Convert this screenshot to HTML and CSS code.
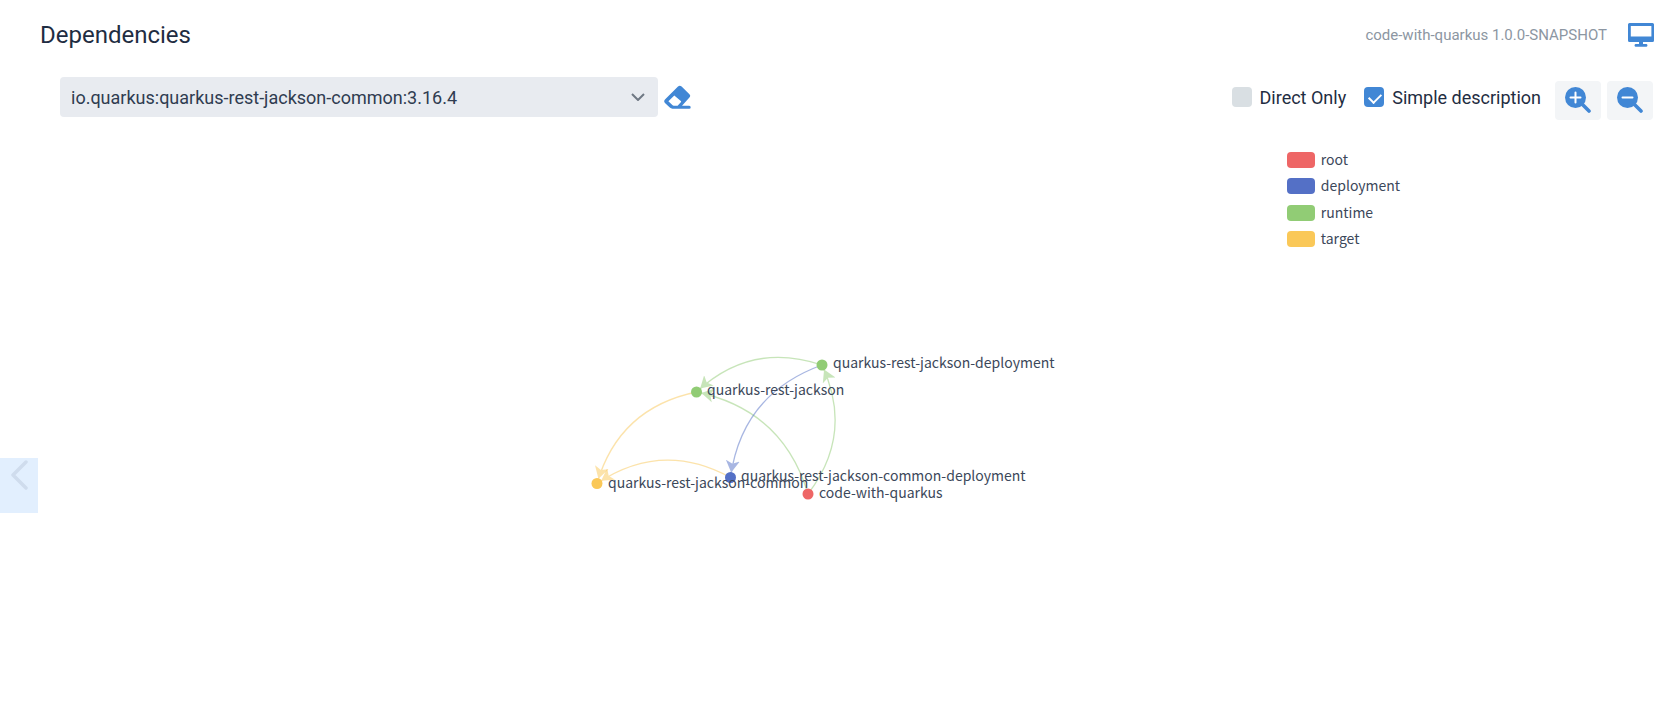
FILE: index.html
```html
<!DOCTYPE html>
<html lang="en">
<head>
<meta charset="utf-8">
<meta name="viewport" content="width=device-width, initial-scale=1">
<title>Dependencies</title>
<link rel="stylesheet" href="styles.css">
</head>
<body>
<header class="header">
  <h1 class="title">Dependencies</h1>
  <div class="app-info">
    <span>code-with-quarkus 1.0.0-SNAPSHOT</span>
    <button class="icon-button" type="button" aria-label="Theme">
      <svg width="26" height="24" viewBox="0 0 26 24"><path fill="currentColor" fill-rule="evenodd" d="M1.500 0h23A1.500 1.500 0 0 1 26 1.500v16a1.500 1.500 0 0 1-1.500 1.500H15v2h3.500a1.500 1.500 0 0 1 0 2.800h-11a1.500 1.500 0 0 1 0-2.800H11v-2H1.500A1.500 1.500 0 0 1 0 17.500v-16A1.500 1.500 0 0 1 1.500 0zM2.800 3v10.500h20.600V3z"/></svg>
    </button>
  </div>
</header>
<main class="content">
  <div class="toolbar">
    <div class="picker">
      <div class="select-box">
        <select class="select" aria-label="Dependency"><option>io.quarkus:quarkus-rest-jackson-common:3.16.4</option></select>
        <svg class="select-arrow" width="14" height="8" viewBox="0 0 14 8"><path d="M1 1l6 6 6-6" fill="none" stroke="currentColor" stroke-width="2"/></svg>
      </div>
      <button class="icon-button" type="button" aria-label="Clear">
        <svg width="27" height="24" viewBox="0 0 27 24"><path fill="currentColor" fill-rule="evenodd" d="M14 1.600a2.500 2.500 0 0 1 3.600 0l7.600 7.300a2.700 2.700 0 0 1 0 3.900L18 20.700h7.200a1.500 1.500 0 0 1 0 3H8.500a4 4 0 0 1-2.700-1.100l-4.600-4.400a2.700 2.700 0 0 1 0-3.900zM10.300 10.400L4.400 16.200l4.200 4.100q.5.400 1 .4h4l3.200-3.400q.6-.7 0-1.200z"/></svg>
      </button>
    </div>
    <div class="options">
      <label class="option"><input class="check" type="checkbox">Direct Only</label>
      <label class="option"><input class="check" type="checkbox" checked>Simple description</label>
      <div class="zoom-buttons">
        <button class="zoom-button" type="button" aria-label="Zoom in">
          <svg width="26" height="26" viewBox="0 0 26 26"><circle cx="10.500" cy="10.500" r="10.500" fill="currentColor"/><path d="M17 17l7 7" stroke="currentColor" stroke-width="3.600" stroke-linecap="round"/><path d="M5.500 10.500h10M10.500 5.500v10" stroke="#fff" stroke-width="2" stroke-linecap="round"/></svg>
        </button>
        <button class="zoom-button" type="button" aria-label="Zoom out">
          <svg width="26" height="26" viewBox="0 0 26 26"><circle cx="10.500" cy="10.500" r="10.500" fill="currentColor"/><path d="M17 17l7 7" stroke="currentColor" stroke-width="3.600" stroke-linecap="round"/><path d="M5.500 10.500h10" stroke="#fff" stroke-width="2" stroke-linecap="round"/></svg>
        </button>
      </div>
    </div>
  </div>
  <ul class="legend">
    <li class="legend-item"><span class="swatch root"></span>root</li>
    <li class="legend-item"><span class="swatch deployment"></span>deployment</li>
    <li class="legend-item"><span class="swatch runtime"></span>runtime</li>
    <li class="legend-item"><span class="swatch target"></span>target</li>
  </ul>
  <div class="chart">
    <svg class="graph" width="480" height="160" viewBox="590 350 480 160">
      <defs>
        <marker id="arrow-green" markerUnits="userSpaceOnUse" markerWidth="30" markerHeight="20" refX="17" refY="8" orient="auto"><path fill="#91cc75" d="M12 8L0 1 3 8 0 15z"/></marker>
        <marker id="arrow-blue" markerUnits="userSpaceOnUse" markerWidth="30" markerHeight="20" refX="17" refY="8" orient="auto"><path fill="#5470c6" d="M12 8L0 1 3 8 0 15z"/></marker>
        <marker id="arrow-yellow" markerUnits="userSpaceOnUse" markerWidth="30" markerHeight="20" refX="17" refY="8" orient="auto"><path fill="#fac858" d="M12 8L0 1 3 8 0 15z"/></marker>
      </defs>
      <g class="edges">
        <path class="edge-green" marker-end="url(#arrow-green)" d="M822 365Q751 341 696.500 392"/>
        <path class="edge-green" marker-end="url(#arrow-green)" d="M808 494Q854 434 822 365"/>
        <path class="edge-green" marker-end="url(#arrow-green)" d="M808 494Q783 410 696.500 392"/>
        <path class="edge-blue" marker-end="url(#arrow-blue)" d="M822 365Q742 394 730.500 477.500"/>
        <path class="edge-yellow" marker-end="url(#arrow-yellow)" d="M696.500 392Q619 408 597 483.500"/>
        <path class="edge-yellow" marker-end="url(#arrow-yellow)" d="M730.500 477.500Q662 440 597 483.500"/>
      </g>
      <circle class="root" cx="808" cy="494" r="5.500"/>
      <circle class="runtime" cx="822" cy="365" r="5.500"/>
      <circle class="runtime" cx="696.500" cy="392" r="5.500"/>
      <circle class="deployment" cx="730.500" cy="477.500" r="5.500"/>
      <circle class="target" cx="597" cy="483.500" r="5.500"/>
      <g class="node-labels">
        <text x="833" y="368">quarkus-rest-jackson-deployment</text>
        <text x="707" y="395">quarkus-rest-jackson</text>
        <text x="741" y="481">quarkus-rest-jackson-common-deployment</text>
        <text x="608" y="488">quarkus-rest-jackson-common</text>
        <text x="819" y="498">code-with-quarkus</text>
      </g>
    </svg>
  </div>
</main>
<button class="side-tab" type="button" aria-label="Open menu">
  <svg width="18" height="30" viewBox="0 0 18 30"><path d="M16 2L3 15l13 13" fill="none" stroke="currentColor" stroke-width="3.500" stroke-linecap="round" stroke-linejoin="round"/></svg>
</button>
</body>
</html>
```
FILE: styles.css
```css
* { box-sizing: border-box; }
body {
  margin: 0;
  min-height: 100vh;
  display: flex;
  flex-direction: column;
  background: #fff;
  color: #1f2d42;
  font-family: Roboto, sans-serif;
  font-size: 18px;
}
button { font: inherit; border: 0; padding: 0; cursor: pointer; }
svg { display: block; }
.header {
  display: flex;
  align-items: center;
  justify-content: space-between;
  height: 69px;
  padding: 0 15px 0 40px;
}
.title { margin: 0; font-size: 24px; font-weight: 400; }
.app-info { display: flex; align-items: center; gap: 21px; color: #8c96a2; font-size: 15px; }
.icon-button { background: none; color: #4187d5; }
.content { flex: 1; display: flex; flex-direction: column; padding-top: 8px; }
.toolbar { display: flex; justify-content: space-between; padding: 0 16px 0 60px; }
.picker { display: flex; align-items: center; gap: 6px; flex: 0 1 631px; height: 40px; }
.select-box { position: relative; flex: 1; }
.select {
  appearance: none;
  width: 100%;
  height: 40px;
  padding: 0 40px 0 11px;
  border: 0;
  border-radius: 4px;
  background: #e8ebf0;
  color: #2f3c50;
  font: inherit;
}
.select-arrow { position: absolute; right: 13px; top: 16px; color: #6f7884; pointer-events: none; }
.options { display: flex; align-items: flex-start; gap: 18px; }
.option { display: flex; align-items: center; gap: 8px; height: 40px; }
.check {
  appearance: none;
  width: 20px;
  height: 20px;
  margin: 0;
  border-radius: 4px;
  background: #d9dfe3;
}
.check:checked { position: relative; background: #4187d5; }
.check:checked::after {
  content: "";
  position: absolute;
  left: 7px;
  top: 4px;
  width: 6px;
  height: 10px;
  border: solid #fff;
  border-width: 0 2px 2px 0;
  transform: rotate(45deg);
}
.zoom-buttons { display: flex; gap: 6px; margin: 4px 0 0 -4px; }
.zoom-button {
  display: flex;
  align-items: flex-start;
  justify-content: center;
  width: 46px;
  height: 39px;
  padding-top: 6px;
  border-radius: 4px;
  background: #f3f5f7;
  color: #4187d5;
}
.legend {
  display: flex;
  flex-direction: column;
  justify-content: space-between;
  height: 95px;
  margin: 32px 0 0 77.100%;
  padding: 0;
  list-style: none;
}
.legend-item, .node-labels { font-family: "Noto Sans CJK SC", sans-serif; font-size: 14px; }
.legend-item { display: flex; gap: 6px; height: 16px; line-height: 14px; color: #3c485a; }
.swatch { width: 28px; height: 16px; border-radius: 4px; }
.root { background: #ee6666; fill: #ee6666; }
.deployment { background: #5470c6; fill: #5470c6; }
.runtime { background: #91cc75; fill: #91cc75; }
.target { background: #fac858; fill: #fac858; }
.chart { flex: 1; display: flex; justify-content: center; padding-top: 103px; }
.graph { margin-right: 9px; }
.edges { fill: none; stroke-width: 1.300; }
.edges path { opacity: .5; }
.edge-green { stroke: #91cc75; }
.edge-blue { stroke: #5470c6; }
.edge-yellow { stroke: #fac858; }
marker path { stroke: none; }
.node-labels { fill: #3c485a; }
.side-tab {
  position: absolute;
  left: 0;
  top: 458px;
  display: flex;
  align-items: flex-start;
  width: 38px;
  height: 55px;
  padding: 2px 0 0 10px;
  background: #e2effe;
  color: #cfdced;
}
```
